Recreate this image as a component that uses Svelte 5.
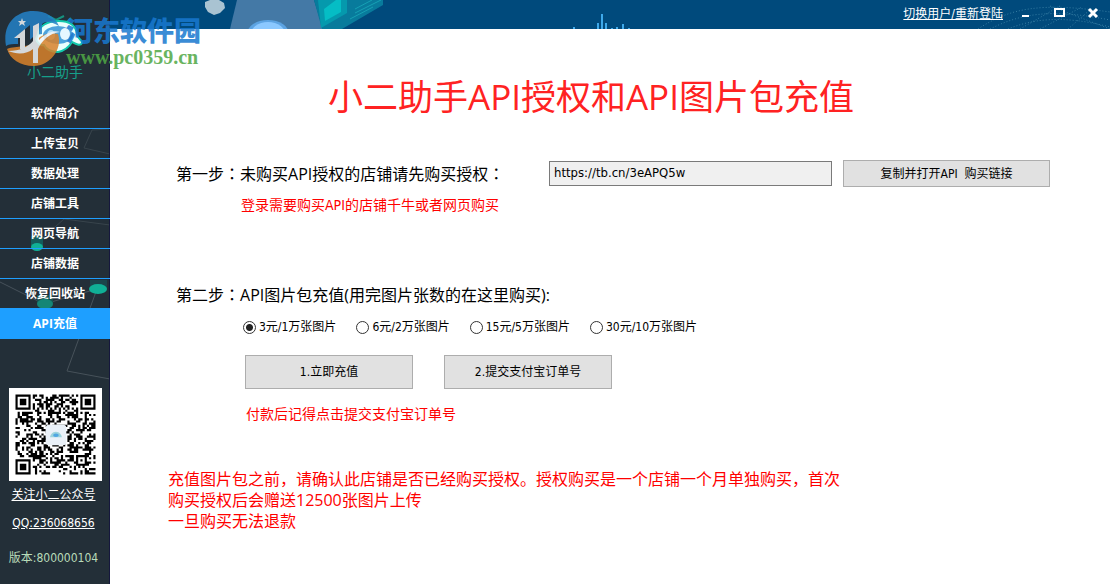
<script lang="ts">
  interface Plan {
    id: string;
    label: string;
  }

  const menu = [
    '软件简介',
    '上传宝贝',
    '数据处理',
    '店铺工具',
    '网页导航',
    '店铺数据',
    '恢复回收站',
    'API充值',
  ];

  const plans: Plan[] = [
    { id: 'p1', label: '3元/1万张图片' },
    { id: 'p2', label: '6元/2万张图片' },
    { id: 'p5', label: '15元/5万张图片' },
    { id: 'p10', label: '30元/10万张图片' },
  ];

  let current = $state('API充值');
  let plan = $state('p1');
  let link = $state('https://tb.cn/3eAPQ5w');

  const QR_SIZE = 37;

  function inFinder(x: number, y: number) {
    const far = QR_SIZE - 8;
    return (x < 8 && y < 8) || (x >= far && y < 8) || (x < 8 && y >= far);
  }

  function square(x: number, y: number, cx: number, cy: number) {
    return Math.max(Math.abs(x - cx), Math.abs(y - cy));
  }

  function buildQr(): string {
    let d = '';
    let seed = 7919;
    for (let y = 0; y < QR_SIZE; y++) {
      for (let x = 0; x < QR_SIZE; x++) {
        seed = (seed * 1103515245 + 12345) % 2147483648;
        let on = seed / 2147483648 > 0.49;
        if (inFinder(x, y)) {
          const r = Math.min(
            square(x, y, 3, 3),
            square(x, y, QR_SIZE - 4, 3),
            square(x, y, 3, QR_SIZE - 4)
          );
          on = r === 3 || r < 2;
        } else if (square(x, y, 30, 30) < 3) {
          on = square(x, y, 30, 30) !== 1;
        } else if (x === 6 || y === 6) {
          on = (x + y) % 2 === 0;
        }
        if (on) d += `M${x} ${y}h1v1h-1z`;
      }
    }
    return d;
  }

  const qrPath = buildQr();

  function openLink() {
    navigator.clipboard?.writeText(link);
    window.open(link);
  }
</script>

<div class="window">
  <aside class="sidebar">
    <svg class="backdrop" width="110" height="584" viewBox="0 0 110 584" aria-hidden="true">
      <g fill="none" stroke="#47525a">
        <path d="M110 129L92 130L84 148L110 154" stroke="#38444c" />
        <path d="M37 243L64 219L110 225" stroke="#38444c" />
        <path d="M0 282L44 304L97 289L67 371L110 379" />
      </g>
      <path d="M31 236h12v11h-12z" fill="#155b5b" />
      <ellipse cx="37" cy="247" rx="6" ry="4" fill="#10b096" />
      <path d="M90 280h17v9h-17z" fill="#1b454b" />
      <ellipse cx="98" cy="289" rx="9" ry="5" fill="#10b096" />
      <path d="M37 295h16v9h-16z" fill="#18504f" />
      <ellipse cx="45" cy="304" rx="8" ry="5" fill="#158676" />
      <path d="M109 0h1v584h-1z" fill="#15173c" />
    </svg>

    <div class="brand">
      <svg width="110" height="62" viewBox="0 0 110 62" aria-hidden="true">
        <path d="M48 16l8 4 8-4M56 20v3M71 18l-4 4" fill="none" stroke="#15927f" stroke-width="2" />
        <path
          d="M38 34c1-8 9-13 21-13s17 6 18 13c0 5 6 6 5 9-2 4-8 0-10-1-4 7-9 9-14 10-7 0-12-3-14-7-3 1-7-2-8-6z"
          fill="#e9fffd"
          stroke="#12c9ad"
          stroke-width="2"
        />
        <ellipse cx="58" cy="35" rx="15" ry="9" fill="#4da3dc" />
        <ellipse cx="65" cy="34" rx="5" ry="6" fill="#e6f7ff" />
        <ellipse cx="51" cy="35" rx="4" ry="5" fill="#b4e0fa" />
      </svg>
      <span>小二助手</span>
    </div>

    <nav class="menu">
      {#each menu as item}
        <button class:active={item === current} onclick={() => (current = item)}>{item}</button>
      {/each}
    </nav>

    <svg class="qr" viewBox="-3 -3 43 43" role="img" aria-label="公众号二维码">
      <path d="M-3-3h43v43h-43z" fill="#fff" />
      <path d={qrPath} fill="#000" />
      <rect x="14" y="14" width="9.500" height="9.500" rx="1.500" fill="#eaf1f8" />
      <path d="M16 19.800c0-1 1-2.600 2.700-2.600s2.700 1.600 2.700 2.600z" fill="#9bd3dc" />
      <ellipse cx="18.700" cy="18.800" rx="1.300" ry=".8" fill="#4fa6e2" />
    </svg>

    <div class="contact">
      <a href="#follow">关注小二公众号</a>
      <a href="#qq">QQ:236068656</a>
      <p>版本:800000104</p>
    </div>
  </aside>

  <div class="page">
    <header class="titlebar">
      <svg class="art" width="560" height="29" viewBox="110 0 560 29" aria-hidden="true">
        <path d="M205 2l5-2h9l5 3 1 5-5 5-6 2-6-3-3-5z" fill="#a9c3d2" />
        <path d="M237 0h77l9 29h-93z" fill="#4479a6" />
        <ellipse cx="268" cy="34" rx="21" ry="14" fill="#5ca3e2" />
        <ellipse cx="268" cy="36" rx="18" ry="14" fill="#8bc8ff" />
        <path d="M314 0h69v5l-41 24h-20z" fill="#087b9c" />
        <path d="M318 0h29v13l-26 15z" fill="#0599ad" />
        <path d="M324 9l12-9h5v12l-16 9z" fill="#05bdc5" />
        <path d="M355 13l26-13M355 9l17-9M350 19l23-12" stroke="#16a0b4" />
        <path
          d="M574 27v2M598 23v6M602 14v15M606 23v6M612 28v1M617 27v2M623 24v5M629 28v1"
          stroke="#3fa9ea"
          stroke-width="2"
        />
      </svg>
      <svg class="globe" width="140" height="29" viewBox="0 0 140 29" aria-hidden="true">
        <g fill="none" stroke="#4c93b4" stroke-dasharray="1 2">
          <path d="M8 29C40 8 70 2 140 12" />
          <path d="M20 29C50 14 80 8 140 20" />
          <path d="M38 29C60 20 90 14 140 27" />
          <path d="M50 29L90 6M70 29L112 7M98 29L122 8M80 6L140 29" />
        </g>
      </svg>
      <a class="switch" href="#login">切换用户/重新登陆</a>
      <button class="win" aria-label="最小化">
        <svg width="12" height="12" viewBox="0 0 12 12"><path d="M3 8h7v2H3z" fill="#fff" /></svg>
      </button>
      <button class="win" aria-label="最大化">
        <svg width="12" height="12" viewBox="0 0 12 12">
          <path d="M2 2h9v7H2z" fill="none" stroke="#fff" stroke-width="2" />
        </svg>
      </button>
      <button class="win" aria-label="关闭">
        <svg width="12" height="12" viewBox="0 0 12 12">
          <path d="M2 2l8 8M10 2l-8 8" stroke="#fff" stroke-width="3" />
        </svg>
      </button>
    </header>

    <main>
      <h1>小二助手API授权和API图片包充值</h1>

      <section class="step first">
        <div class="buy">
          <label for="link">第一步<i>：</i>未购买API授权的店铺请先购买授权<i>：</i></label>
          <input id="link" type="text" bind:value={link} />
          <button class="btn" onclick={openLink}>复制并打开API&nbsp; 购买链接</button>
        </div>
        <p class="hint">登录需要购买API的店铺千牛或者网页购买</p>
      </section>

      <section class="step second">
        <h2>第二步<i>：</i>API图片包充值(用完图片张数的在这里购买):</h2>
        <div class="plans">
          {#each plans as p}
            <label>
              <input type="radio" name="plan" value={p.id} bind:group={plan} />
              {p.label}
            </label>
          {/each}
        </div>
        <div class="actions">
          <button class="btn">1.立即充值</button>
          <button class="btn">2.提交支付宝订单号</button>
        </div>
        <p class="hint">付款后记得点击提交支付宝订单号</p>
      </section>

      <p class="notes">
        充值图片包之前，请确认此店铺是否已经购买授权。授权购买是一个店铺一个月单独购买，首次购买授权后会赠送12500张图片上传<br />一旦购买无法退款
      </p>
    </main>
  </div>

  <div class="stamp">
    <svg width="62" height="60" viewBox="0 0 62 60" aria-hidden="true">
      <path d="M2 38C-2 16 12 3 29 3c13 0 22 6 26 15-8-5-14-5-17-2v10c-5 0-9 2-12 6V17L14 27v9c-5 0-9 0-12 2z" fill="#2382c8" />
      <path d="M3 41c10-4 22 0 30-9 5-6 13-8 21-6 5 16-9 32-24 32C16 58 6 51 3 41z" fill="#d9822b" />
      <path d="M10 30l11-9v20h-5V30zM29 18l6-3v17c8-8 16-10 21-8-10 1-18 8-22 17v14h-5V41c-6 5-15 6-25 2 12 0 20-4 25-10z" fill="#f3f6f8" />
      <path d="M18 10l1 3h3l-2 2 1 3-3-2-3 2 1-3-2-2h3z" fill="#f3f6f8" />
    </svg>
    <div class="stamp-text">
      <b>河东软件园</b>
      <span>www.pc0359.cn</span>
    </div>
  </div>
</div>

<style>
  :global(body) {
    background: #fff;
  }

  .window {
    position: relative;
    display: flex;
    min-height: 100vh;
    font: 12px/20px "DejaVu Sans Condensed", "Noto Sans CJK SC", sans-serif;
    color: #000;
  }

  h1,
  h2,
  p {
    margin: 0;
    font-weight: 400;
  }

  button,
  input {
    font: inherit;
  }

  i {
    font-family: "Noto Sans CJK TC", sans-serif;
    font-style: normal;
  }

  .sidebar {
    position: relative;
    display: flex;
    flex: 0 0 110px;
    flex-direction: column;
    align-items: center;
    background: #232f38;
  }

  .sidebar > * {
    position: relative;
  }

  .sidebar .backdrop {
    position: absolute;
    top: 0;
    left: 0;
  }

  .brand {
    display: flex;
    flex-direction: column;
    align-items: center;
    height: 99px;
    font-size: 14px;
    color: #169f8a;
  }

  .menu {
    align-self: stretch;
  }

  .menu button {
    display: block;
    width: 100%;
    height: 30px;
    padding: 0;
    border: 0;
    border-bottom: 1px solid #1e9fff;
    background: none;
    font: bold 12px/28px "Open Sans", "Noto Sans CJK SC", sans-serif;
    color: #fff;
    cursor: pointer;
  }

  .menu .active {
    background: #1e9fff;
  }

  .qr {
    width: 93px;
    height: 93px;
    margin-top: 49px;
  }

  .contact {
    display: flex;
    flex-direction: column;
    align-items: center;
    gap: 8px;
    margin-top: 4px;
    padding-right: 3px;
  }

  .contact a {
    color: #fff;
  }

  .contact p {
    margin-top: 7px;
    color: #b9dcb9;
  }

  .page {
    flex: 1;
    min-width: 0;
  }

  .titlebar {
    position: relative;
    display: flex;
    justify-content: flex-end;
    height: 29px;
    background: #004a7c;
    overflow: hidden;
  }

  .titlebar > * {
    position: relative;
  }

  .titlebar .art {
    position: absolute;
    top: 0;
    left: 0;
  }

  .titlebar .globe {
    position: absolute;
    top: 0;
    right: 0;
    opacity: 0.7;
  }

  .switch {
    margin-right: 5px;
    line-height: 29px;
    color: #fff;
  }

  .win {
    width: 34px;
    height: 26px;
    padding: 0;
    border: 0;
    background: none;
  }

  .win svg {
    display: block;
    margin: 0 auto;
  }

  main {
    padding: 44px 60px 32px 58px;
  }

  h1 {
    margin-right: 36px;
    font: 35px/48px "Open Sans", "Noto Sans CJK SC", sans-serif;
    color: #ff2222;
    text-align: center;
  }

  h2,
  .buy label,
  .notes {
    font: 16px/24px "Open Sans", "Noto Sans CJK SC", sans-serif;
  }

  .step {
    padding-left: 8px;
  }

  .first {
    margin-top: 39px;
  }

  .second {
    margin-top: 67px;
  }

  .buy {
    display: grid;
    grid-template-columns: 373px minmax(0, 283fr) minmax(0, 218fr);
    align-items: center;
  }

  .buy input {
    height: 25px;
    padding: 0 4px 3px;
    border: 1px solid #7a7a7a;
    background: #f0f0f0;
    box-sizing: border-box;
    font-size: 13px;
  }

  .buy .btn {
    height: 27px;
    margin-left: 11px;
  }

  .btn {
    padding: 0;
    border: 1px solid #adadad;
    background: #e1e1e1;
    color: #000;
  }

  .btn:hover {
    border-color: #0078d7;
    background: #e5f1fb;
  }

  .hint {
    font-size: 14px;
    color: #ff0000;
  }

  .first .hint {
    margin-top: 8px;
    padding-left: 65px;
  }

  .plans {
    display: flex;
    flex-wrap: wrap;
    gap: 20px;
    margin-top: 10px;
    padding-left: 67px;
  }

  .plans label {
    display: flex;
    align-items: center;
    gap: 3px;
  }

  .plans input {
    width: 13px;
    height: 13px;
    margin: 0;
    border: 1px solid #333;
    border-radius: 50%;
    background: #fff;
    appearance: none;
  }

  .plans input:checked {
    background: radial-gradient(circle, #222 3px, #fff 4px);
  }

  .actions {
    display: flex;
    gap: 31px;
    margin-top: 18px;
    padding-left: 69px;
  }

  .actions .btn {
    width: 168px;
    height: 34px;
  }

  .second .hint {
    margin-top: 15px;
    padding-left: 70px;
  }

  .notes {
    max-width: 680px;
    margin-top: 45px;
    line-height: 21px;
    color: #ff0000;
  }

  /* download-site stamp over the top left corner */
  .stamp {
    position: absolute;
    top: 8px;
    left: 4px;
    display: flex;
    pointer-events: none;
    opacity: 0.85;
  }

  .stamp-text {
    display: flex;
    flex-direction: column;
    padding-top: 6px;
  }

  .stamp-text b {
    font: 900 27px/32px "Noto Sans CJK SC", sans-serif;
    color: #1878d0;
  }

  .stamp-text span {
    font: bold 20px/22px "Liberation Serif", serif;
    color: #4fa845;
  }
</style>
